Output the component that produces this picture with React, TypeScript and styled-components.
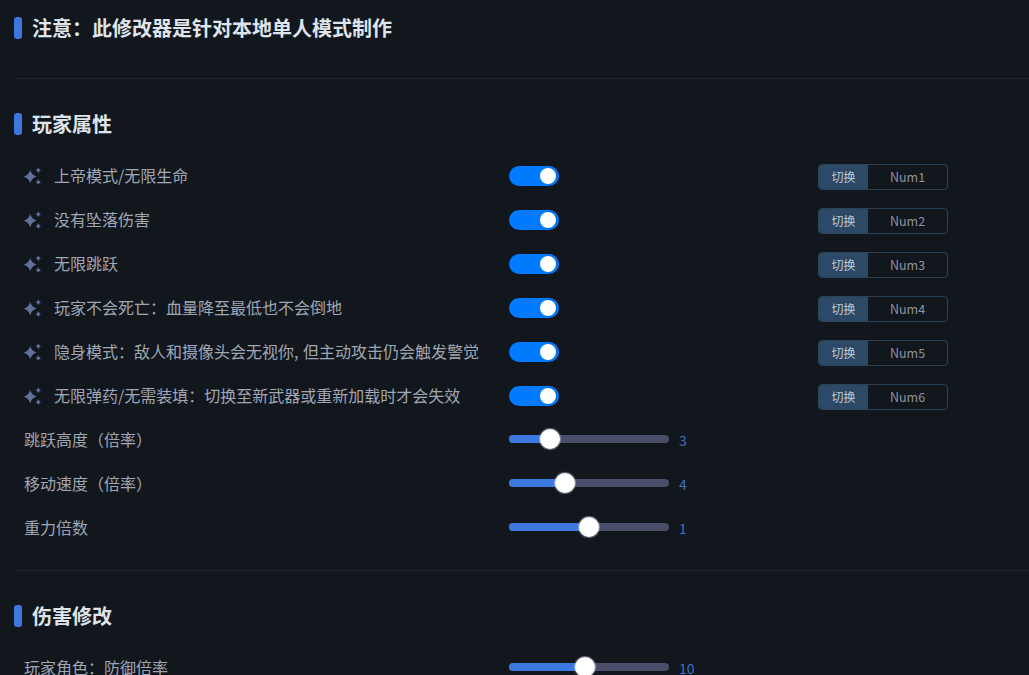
import React from "react";
import styled, { createGlobalStyle } from "styled-components";

const Global = createGlobalStyle`
  html, body { margin: 0; padding: 0; background: #12171e; height: 100%; overflow: hidden; }
  body { font-family: "Noto Sans CJK SC", "Noto Sans", sans-serif; }
`;

const Page = styled.div`
  height: 675px;
  overflow: hidden;
  padding: 0 0 0 14px;
  background: #12171e;
`;

const Section = styled.section<{ $first?: boolean }>`
  padding: ${(p) => (p.$first ? "6px 0 28px" : "23px 0 20px")};
  border-bottom: 1px solid #21262d;
`;

const Heading = styled.h2`
  display: flex;
  align-items: center;
  gap: 10px;
  margin: 0 0 8px;
  height: 44px;
  color: #dfe3ea;
  font-size: 20px;
  font-weight: 700;
  line-height: 44px;
  &::before {
    content: "";
    width: 8px;
    height: 22px;
    border-radius: 3px;
    background: #3c78e0;
  }
`;

const NoteHeading = styled(Heading)`
  margin: 0;
`;

const Row = styled.div`
  display: grid;
  grid-template-columns: 485px 309px 130px;
  align-items: center;
  height: 44px;
  padding-left: 10px;
`;

const Label = styled.div`
  display: flex;
  align-items: center;
  gap: 13px;
  padding-bottom: 2px;
  color: #a0a6b3;
  font-size: 16px;
  line-height: 24px;
  word-spacing: 1px;
  white-space: nowrap;
`;

const Sparkle = styled.svg`
  width: 17px;
  height: 18px;
  flex: none;
  margin-top: 2px;
  color: #5f7199;
`;

const Track = styled.span`
  display: block;
  position: relative;
  width: 50px;
  height: 20px;
  border-radius: 10px;
  background: #007bff;
  &::after {
    content: "";
    position: absolute;
    top: 2px;
    right: 3px;
    width: 16px;
    height: 16px;
    border-radius: 50%;
    background: #fff;
    box-shadow: 1px 0 1px rgba(0, 60, 140, 0.3);
  }
`;

const Hotkey = styled.div`
  display: flex;
  height: 26px;
  margin-top: 2px;
  box-sizing: border-box;
  border: 1px solid #2c4257;
  border-radius: 4px;
  overflow: hidden;
  font-size: 12px;
  line-height: 24px;
`;

const HotkeyTag = styled.span`
  width: 49px;
  background: #2c4a68;
  color: #c0c8d2;
  text-align: center;
`;

const HotkeyValue = styled.span`
  flex: 1;
  color: #8d939e;
  text-align: center;
  font-size: 12.5px;
`;

const SliderBox = styled.div`
  display: flex;
  align-items: center;
  gap: 10px;
`;

const SliderTrack = styled.div`
  position: relative;
  width: 160px;
  height: 8px;
  margin-bottom: 2px;
  border-radius: 4px;
  background: #4a4e69;
`;

const SliderFill = styled.div`
  height: 100%;
  border-radius: 4px;
  background: #3c78e0;
`;

const Thumb = styled.div`
  position: absolute;
  top: 50%;
  width: 20px;
  height: 20px;
  box-sizing: border-box;
  border-radius: 50%;
  background: #fff;
  box-shadow: 0 0 1px 1px rgba(225, 230, 245, 0.4);
  transform: translate(-50%, -50%);
`;

const Value = styled.span`
  color: #3c6fc4;
  font-size: 14px;
`;

const SparkleIcon = () => (
  <Sparkle viewBox="0 0 17 18" fill="currentColor">
    <path d="M6.2 3 Q7.6 8 12.6 9.6 Q7.6 11.2 6.2 16.2 Q4.8 11.2 -0.2 9.6 Q4.8 8 6.2 3 Z" />
    <path d="M14.3 0.6 Q15 2.6 17 3.3 Q15 4 14.3 6 Q13.6 4 11.6 3.3 Q13.6 2.6 14.3 0.6 Z" />
    <path d="M14.3 12.6 Q15 14.5 16.9 15.2 Q15 15.9 14.3 17.8 Q13.6 15.9 11.7 15.2 Q13.6 14.5 14.3 12.6 Z" />
  </Sparkle>
);

const toggles = [
  "上帝模式/无限生命",
  "没有坠落伤害",
  "无限跳跃",
  "玩家不会死亡：血量降至最低也不会倒地",
  "隐身模式：敌人和摄像头会无视你, 但主动攻击仍会触发警觉",
  "无限弹药/无需装填：切换至新武器或重新加载时才会失效",
];

const sliders = [
  { label: "跳跃高度（倍率）", pos: 41, value: "3" },
  { label: "移动速度（倍率）", pos: 56, value: "4" },
  { label: "重力倍数", pos: 80, value: "1" },
];

const SliderControl = ({ pos, value }: { pos: number; value: string }) => (
  <SliderBox>
    <SliderTrack>
      <SliderFill style={{ width: pos }} />
      <Thumb style={{ left: pos }} />
    </SliderTrack>
    <Value>{value}</Value>
  </SliderBox>
);

export default function App() {
  return (
    <Page>
      <Global />
      <Section $first>
        <NoteHeading>注意：此修改器是针对本地单人模式制作</NoteHeading>
      </Section>
      <Section>
        <Heading>玩家属性</Heading>
        {toggles.map((t, i) => (
          <Row key={t}>
            <Label>
              <SparkleIcon />
              {t}
            </Label>
            <Track />
            <Hotkey>
              <HotkeyTag>切换</HotkeyTag>
              <HotkeyValue>Num{i + 1}</HotkeyValue>
            </Hotkey>
          </Row>
        ))}
        {sliders.map((s) => (
          <Row key={s.label}>
            <Label>{s.label}</Label>
            <SliderControl pos={s.pos} value={s.value} />
          </Row>
        ))}
      </Section>
      <Section>
        <Heading>伤害修改</Heading>
        <Row>
          <Label>玩家角色：防御倍率</Label>
          <SliderControl pos={76} value="10" />
        </Row>
      </Section>
    </Page>
  );
}
